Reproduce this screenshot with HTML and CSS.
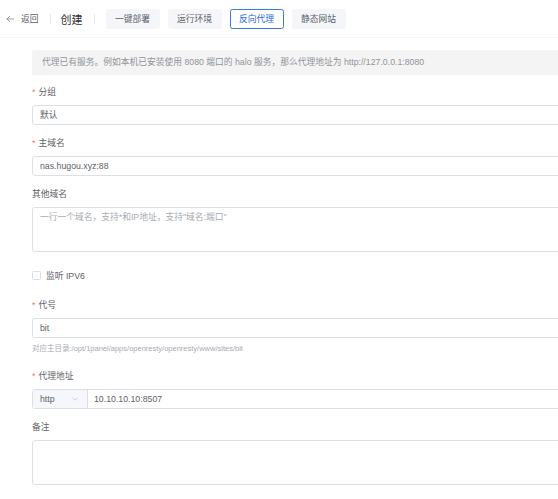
FILE: index.html
```html
<!DOCTYPE html>
<html lang="zh-CN">
<head>
<meta charset="utf-8">
<title>创建</title>
<link rel="stylesheet" href="styles.css">
</head>
<body>
<div class="page">
  <header class="topbar">
    <a class="back">
      <svg class="back-icon" width="8" height="8" viewBox="0 0 8 8"><path d="M7.5 4H1M3.8 1.2L1 4l2.8 2.8" fill="none" stroke="#909399" stroke-width="0.9" stroke-linecap="round" stroke-linejoin="round"/></svg>
      <span>返回</span>
    </a>
    <span class="divider"></span>
    <span class="title">创建</span>
    <span class="divider"></span>
    <nav class="tabs">
      <button class="tab">一键部署</button>
      <button class="tab">运行环境</button>
      <button class="tab active">反向代理</button>
      <button class="tab">静态网站</button>
    </nav>
  </header>

  <main class="form">
    <div class="alert">代理已有服务。例如本机已安装使用 8080 端口的 halo 服务，那么代理地址为 http://127.0.0.1:8080</div>

    <div class="item">
      <div class="label required">分组</div>
      <div class="input">默认</div>
    </div>

    <div class="item">
      <div class="label required">主域名</div>
      <div class="input">nas.hugou.xyz:88</div>
    </div>

    <div class="item">
      <div class="label">其他域名</div>
      <div class="textarea placeholder">一行一个域名，支持*和IP地址，支持"域名:端口"</div>
    </div>

    <div class="check-row">
      <span class="checkbox"></span>
      <span class="check-label">监听 IPV6</span>
    </div>

    <div class="item with-help">
      <div class="label required">代号</div>
      <div class="input">bit</div>
      <div class="help">对应主目录:/opt/1panel/apps/openresty/openresty/www/sites/bit</div>
    </div>

    <div class="item">
      <div class="label required">代理地址</div>
      <div class="input-group">
        <div class="select">
          <span>http</span>
          <svg class="chevron" width="6" height="4" viewBox="0 0 6 4"><path d="M0.6 0.8L3 3.2 5.4 0.8" fill="none" stroke="#b4b7bd" stroke-width="0.7"/></svg>
        </div>
        <div class="group-input">10.10.10.10:8507</div>
      </div>
    </div>

    <div class="item">
      <div class="label">备注</div>
      <div class="textarea"></div>
    </div>
  </main>
</div>
</body>
</html>
```

FILE: styles.css
```css
html, body {
  margin: 0;
  padding: 0;
  overflow: hidden;
  background: #ffffff;
}

body {
  font-family: "Liberation Sans", "Noto Sans CJK SC", sans-serif;
  font-size: 8.75px;
  color: #606266;
}

.page {
  width: 660px;
}

.topbar {
  display: flex;
  align-items: center;
  height: 37px;
  padding-left: 6px;
  border-bottom: 1px solid #f2f3f5;
}

.back {
  display: flex;
  align-items: center;
  gap: 7px;
  color: #606266;
}

.back-icon {
  display: block;
}

.divider {
  width: 1px;
  height: 10px;
  background: #e4e7ed;
  margin: 0 10px 0 11px;
}

.title {
  font-size: 11px;
  color: #303133;
}

.tabs {
  display: flex;
  gap: 8px;
  margin-left: 1px;
}

.tab {
  width: 54px;
  height: 20px;
  padding: 0;
  border: 1px solid #f4f6f9;
  border-radius: 2.5px;
  background: #f4f6f9;
  color: #606266;
  font-family: inherit;
  font-size: 8.75px;
}

.tab.active {
  background: #ffffff;
  border-color: #3c78e8;
  color: #2a66e0;
}

.form {
  padding-left: 32px;
  width: 620px;
}

.alert {
  margin-top: 12px;
  height: 25px;
  line-height: 25px;
  padding-left: 10px;
  background: #f4f4f5;
  border-radius: 2.5px;
  color: #909399;
}

.item {
  margin-top: 9px;
}

.item + .item {
  margin-top: 10px;
}

.label {
  line-height: 16px;
  margin-bottom: 5px;
  color: #606266;
}

.label.required::before {
  content: "*";
  color: #f56c6c;
  margin-right: 3px;
}

.input,
.textarea,
.input-group {
  box-sizing: border-box;
  border: 1px solid #dcdfe6;
  border-radius: 2.5px;
  background: #ffffff;
}

.input {
  height: 20px;
  line-height: 18px;
  padding-left: 7px;
}

.textarea {
  height: 45px;
  line-height: 13px;
  padding: 3px 7px;
}

.placeholder {
  color: #a8abb2;
}

.check-row {
  display: flex;
  align-items: center;
  height: 20px;
  margin-top: 13px;
  margin-bottom: 12px;
}

.checkbox {
  box-sizing: border-box;
  width: 9px;
  height: 9px;
  border: 1px solid #dcdfe6;
  border-radius: 1.5px;
  background: #ffffff;
}

.check-label {
  margin-left: 5px;
}

.check-row + .item {
  margin-top: 0;
}

.help {
  margin-top: 5px;
  line-height: 12px;
  font-size: 7.5px;
  color: #a8abb2;
}

.with-help + .item {
  margin-top: 13px;
}

.input-group {
  display: flex;
  height: 20px;
}

.select {
  display: flex;
  align-items: center;
  justify-content: space-between;
  width: 55px;
  padding: 0 9px 0 7px;
  box-sizing: border-box;
  background: #f5f7fa;
  border-right: 1px solid #dcdfe6;
  line-height: 18px;
}

.chevron {
  display: block;
}

.group-input {
  flex: 1;
  line-height: 18px;
  padding-left: 6px;
}
```
